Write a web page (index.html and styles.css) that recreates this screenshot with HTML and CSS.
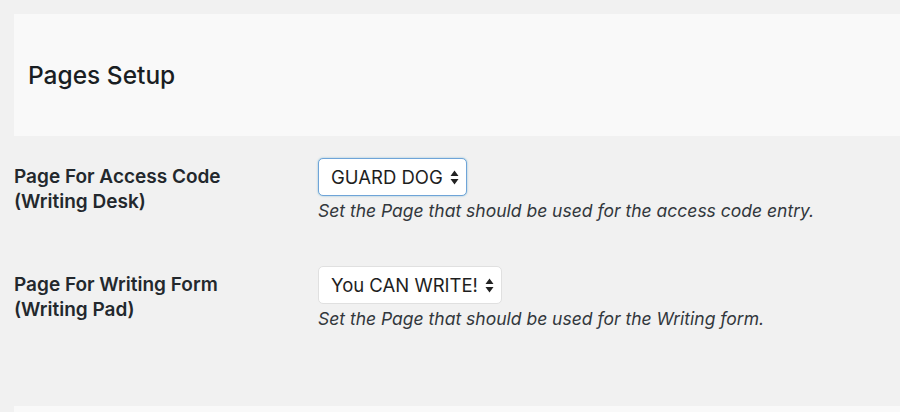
FILE: index.html
```html
<!DOCTYPE html>
<html>
<head>
<meta charset="utf-8">
<link rel="stylesheet" href="styles.css">
</head>
<body>
<div class="panel header">
  <h2 class="title">Pages Setup</h2>
</div>
<div class="form">
  <div class="row">
    <div class="label">Page For Access Code<br>(Writing Desk)</div>
    <div class="field">
      <div class="select focused">
        <span class="select-text">GUARD DOG</span>
        <svg class="arrows" width="9" height="15" viewBox="0 0 9 15"><path d="M4.5 0.5 L8.5 6 H0.5 Z M4.5 14.5 L8.5 9 H0.5 Z" fill="#222"/></svg>
      </div>
      <p class="desc">Set the Page that should be used for the access code entry.</p>
    </div>
  </div>
  <div class="row">
    <div class="label">Page For Writing Form<br>(Writing Pad)</div>
    <div class="field">
      <div class="select">
        <span class="select-text">You CAN WRITE!</span>
        <svg class="arrows" width="9" height="15" viewBox="0 0 9 15"><path d="M4.5 0.5 L8.5 6 H0.5 Z M4.5 14.5 L8.5 9 H0.5 Z" fill="#222"/></svg>
      </div>
      <p class="desc">Set the Page that should be used for the Writing form.</p>
    </div>
  </div>
</div>
<div class="panel footer"></div>
</body>
</html>
```

FILE: styles.css
```css
html, body {
  margin: 0;
  padding: 0;
}
body {
  background: #f1f1f1;
  font-family: Inter, "Noto Sans", sans-serif;
  color: #23282d;
  width: 900px;
  height: 412px;
  overflow: hidden;
}
.panel {
  background: #f9f9f9;
  margin-left: 14px;
}
.header {
  margin-top: 14px;
  height: 122px;
  display: flex;
  align-items: center;
  padding-left: 14px;
}
.title {
  margin: 0;
  font-size: 24.5px;
  font-weight: 500;
  color: #191e23;
}
.form {
  padding: 22px 0 0 14px;
  height: 248px;
}
.row {
  display: flex;
  height: 108px;
}
.label {
  width: 304px;
  flex: none;
  font-size: 19px;
  font-weight: 600;
  line-height: 25px;
  padding-top: 6px;
  color: #23282d;
}
.field {
  display: flex;
  flex-direction: column;
  align-items: flex-start;
}
.select {
  box-sizing: border-box;
  height: 38px;
  display: flex;
  align-items: center;
  gap: 7px;
  padding: 0 7px 0 12px;
  background: #fff;
  border: 1px solid #e0e0e0;
  border-radius: 5px;
  font-size: 18.5px;
  color: #1e1e1e;
}
.select.focused {
  border-color: #6fa4d8;
  box-shadow: 0 0 2px rgba(30, 140, 190, 0.5);
}
.desc {
  margin: 4px 0 0;
  font-size: 17.5px;
  font-style: italic;
  color: #32373c;
  line-height: 22px;
}
.footer {
  height: 20px;
}
```
